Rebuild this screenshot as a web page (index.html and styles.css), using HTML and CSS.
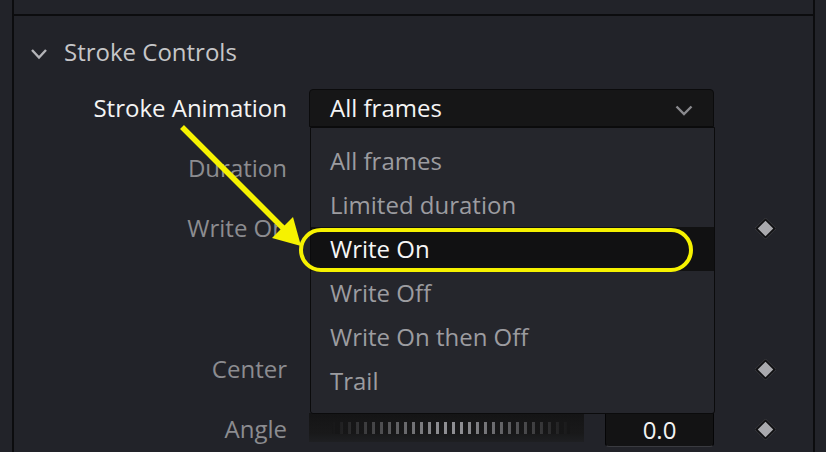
FILE: index.html
```html
<!DOCTYPE html>
<html lang="en">
<head>
<meta charset="utf-8">
<title>Stroke Controls</title>
<link rel="stylesheet" href="styles.css">
</head>
<body>
<div class="app">
  <div class="gutter"></div>
  <div class="panel">
    <div class="top-strip"></div>
    <div class="section-head">
      <svg class="chev" width="18" height="12" viewBox="0 0 18 12"><path d="M2 2 L9 9.5 L16 2" fill="none" stroke="#b4b4b8" stroke-width="2.4"/></svg>
      <span class="section-title">Stroke Controls</span>
    </div>
    <div class="grid">
      <div class="label active">Stroke Animation</div>
      <div class="control">
        <div class="dropdown">
          <span>All frames</span>
          <svg class="dd-chev" width="18" height="11" viewBox="0 0 18 11"><path d="M1.5 1.5 L9 9 L16.5 1.5" fill="none" stroke="#8a8a8e" stroke-width="2.4"/></svg>
          <ul class="menu">
            <li>All frames</li>
            <li>Limited duration</li>
            <li class="selected">Write On<span class="ring"></span></li>
            <li>Write Off</li>
            <li>Write On then Off</li>
            <li>Trail</li>
          </ul>
        </div>
      </div>
      <div class="key"></div>

      <div class="label">Duration</div>
      <div class="control"></div>
      <div class="key"></div>

      <div class="label">Write On</div>
      <div class="control"></div>
      <div class="key"><span class="diamond"></span></div>

      <div class="label"></div>
      <div class="control"></div>
      <div class="key"></div>

      <div class="label">Center</div>
      <div class="control"></div>
      <div class="key"><span class="diamond"></span></div>

      <div class="label">Angle</div>
      <div class="control angle">
        <div class="slider"><div class="ticks"></div></div>
        <div class="number">0.0</div>
      </div>
      <div class="key"><span class="diamond"></span></div>
    </div>
  </div>
</div>
<svg class="arrow" width="826" height="452" viewBox="0 0 826 452">
  <line x1="182" y1="127" x2="286" y2="231" stroke="#f6f200" stroke-width="5.5" stroke-linecap="butt"/>
  <polygon points="301,246 293,217 272,238" fill="#f6f200"/>
</svg>
</body>
</html>
```

FILE: styles.css
```css
* { box-sizing: border-box; }
html, body { margin: 0; padding: 0; }
body {
  width: 826px;
  height: 452px;
  overflow: hidden;
  background: #222329;
  font-family: "Open Sans", "Noto Sans", sans-serif;
  font-size: 24px;
  position: relative;
}
.app {
  display: flex;
  height: 452px;
}
.gutter { width: 12px; flex: none; }
.panel {
  width: 803px;
  flex: none;
  border-left: 2px solid #0c0c0e;
  border-right: 2px solid #0c0c0e;
  display: flex;
  flex-direction: column;
}
.top-strip {
  height: 16px;
  border-bottom: 2px solid #0c0c0e;
  flex: none;
}
.section-head {
  height: 73px;
  display: flex;
  align-items: center;
  padding-left: 16px;
  gap: 16px;
  flex: none;
}
.chev { flex: none; margin-top: 2px; }
.section-title {
  color: #c6c6c8;
  line-height: 1;
  margin-top: -2px;
}
.grid {
  display: grid;
  grid-template-columns: 295px 405px 99px;
  grid-template-rows: 38px 38px 38px 59px 38px 38px;
  row-gap: 22px;
}
.label {
  padding-right: 22px;
  text-align: right;
  color: #8c8c90;
  line-height: 38px;
  white-space: nowrap;
}
.label.active { color: #f4f4f4; }
.control { position: relative; }
.key {
  display: flex;
  align-items: center;
  justify-content: center;
  padding-left: 3px;
}
.diamond {
  width: 15px;
  height: 15px;
  background: #a9a9ad;
  border: 2px solid #101012;
  transform: rotate(45deg);
}
.dropdown {
  position: relative;
  height: 38px;
  background: #161617;
  border: 1px solid #0b0b0c;
  border-radius: 4px 4px 0 0;
  display: flex;
  align-items: center;
  justify-content: space-between;
  padding: 0 20px 0 20px;
  color: #f4f4f4;
  line-height: 1;
}
.dd-chev { margin-top: 4px; }
.menu {
  position: absolute;
  left: 0;
  top: 37px;
  width: 405px;
  height: 287px;
  margin: 0;
  padding: 11px 0 0 0;
  list-style: none;
  background: #25262c;
  border: 1px solid #0b0b0c;
  border-radius: 0 0 3px 3px;
  z-index: 2;
}
.menu li {
  position: relative;
  height: 44px;
  line-height: 44px;
  padding-left: 19px;
  color: #9c9ca0;
  white-space: nowrap;
}
.menu li.selected {
  background: #111112;
  color: #f6f6f6;
}
.ring {
  position: absolute;
  left: -12px;
  top: 1px;
  width: 394px;
  height: 44px;
  border: 4.5px solid #f6f200;
  border-radius: 22px;
}
.angle {
  display: flex;
  align-items: flex-start;
  gap: 21px;
}
.slider {
  margin-top: 3px;
  width: 275px;
  height: 29px;
  background: linear-gradient(to bottom, #141415 0%, #19191a 70%, #1e1f22 100%);
  padding: 9px 14px 0 23px;
  flex: none;
}
.ticks {
  height: 12px;
  background:
    linear-gradient(to right, #161617 0%, rgba(22,22,23,0.55) 20%, rgba(22,22,23,0) 45%, rgba(22,22,23,0) 55%, rgba(22,22,23,0.55) 80%, #161617 100%),
    repeating-linear-gradient(to right, #8e8e92 0px, #8e8e92 3px, transparent 3px, transparent 8px);
}
.number {
  margin-top: 3px;
  width: 109px;
  height: 34px;
  background: #131314;
  border: 1px solid #050506;
  border-bottom-color: #3a3b40;
  border-radius: 0 0 4px 4px;
  color: #f2f2f2;
  text-align: center;
  line-height: 32px;
  flex: none;
}
.arrow {
  position: absolute;
  left: 0;
  top: 0;
  pointer-events: none;
  z-index: 5;
}
```
